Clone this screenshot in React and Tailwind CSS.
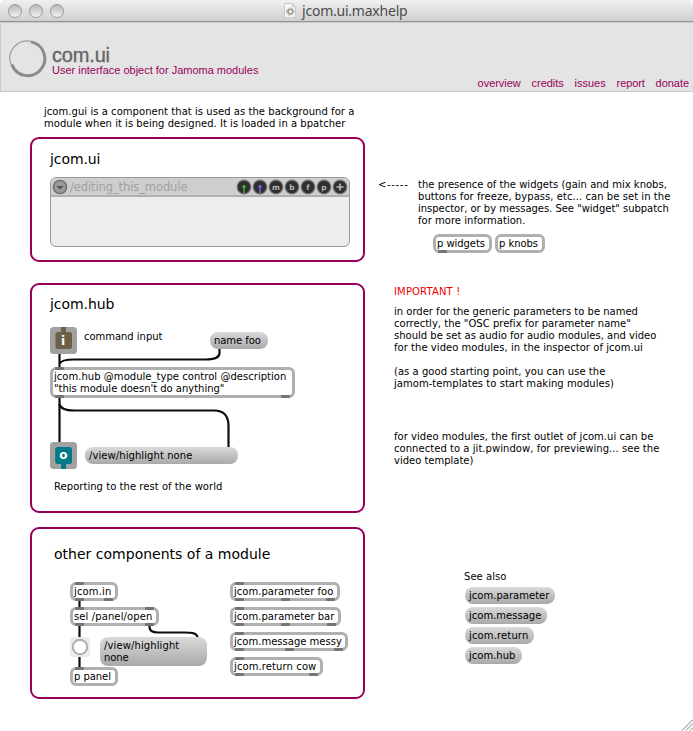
import React, { useLayoutEffect, useRef } from "react";

/* One line of text whose tracking is computed so that it spans `w` pixels. */
function Line({ w, className = "", children }) {
  const ref = useRef(null);
  useLayoutEffect(() => {
    const el = ref.current;
    el.style.letterSpacing = "0px";
    const natural = el.getBoundingClientRect().width;
    el.style.letterSpacing = (w - 0.6 - natural) / children.length + "px";
  }, [w, children]);
  return (
    <span className={"block " + className}>
      <span ref={ref} className="inline-block whitespace-pre align-top">
        {children}
      </span>
    </span>
  );
}

function Port({ className }) {
  return <span className={"absolute h-[3px] w-[9px] rounded-[1px] bg-[#747474] " + className} />;
}

function Box({ className, lines, ports = [] }) {
  return (
    <div className={"rounded-[6px] border-[3px] border-[#b0b0b0] bg-white pt-px pl-[1px] " + className}>
      {lines.map(([t, w]) => (
        <Line key={t} w={w}>{t}</Line>
      ))}
      {ports.map((p) => (
        <Port key={p} className={p} />
      ))}
    </div>
  );
}

function Message({ className, lines }) {
  return (
    <div className={"rounded-[8px] bg-linear-to-b from-[#dadada] to-[#a9a9a9] pt-[3px] pl-[4px] " + className}>
      {lines.map(([t, w]) => (
        <Line key={t} w={w}>{t}</Line>
      ))}
    </div>
  );
}

function Panel({ className, children }) {
  return (
    <section className={"relative w-[335px] rounded-[9px] border-2 border-[#99005c] bg-white " + className}>
      {children}
    </section>
  );
}

function TrafficLight() {
  return (
    <span className="h-[14px] w-[14px] rounded-full border border-[#999] bg-linear-to-b from-[#b9b9b9] via-[#d4d4d4] to-[#f4f4f4]" />
  );
}

function TitleBar() {
  return (
    <div className="flex h-[22px] items-center rounded-t-[5px] border-b border-[#949494] bg-linear-to-b from-[#f0f0f0] to-[#d0d0d0] pl-[8px]">
      <div className="flex gap-[7px]">
        <TrafficLight />
        <TrafficLight />
        <TrafficLight />
      </div>
      <svg className="ml-[220px]" width="12" height="15" viewBox="0 0 12 15">
        <path d="M.5 .5h8l3 3v11H.5z" fill="#f4f4f4" stroke="#c9c9c9" />
        <path d="M8.5 .5v3h3" fill="#ddd" stroke="#c9c9c9" />
        <circle cx="6.5" cy="8.5" r="2.3" fill="none" stroke="#9a9a9a" strokeWidth="1.5" />
        <circle cx="6.5" cy="8.5" r="3.6" fill="none" stroke="#adadad" strokeWidth="1" strokeDasharray="1.4 1.5" />
        <path d="M3.2 6.8l-.6 2.4" stroke="#7cb7dd" strokeWidth="1.2" />
        <path d="M4 11.2l2 .9" stroke="#e6a36c" strokeWidth="1.2" />
      </svg>
      <Line w={106} className="mt-px ml-[6px] font-['Noto_Sans',sans-serif] text-[14px] leading-[18px] text-[#4c4c4c]">
        jcom.ui.maxhelp
      </Line>
    </div>
  );
}

function Header() {
  return (
    <header className="flex h-[70px] justify-between border border-r-0 border-[#c8c8c8] bg-[#e4e4e4] font-['Liberation_Sans',Arial,sans-serif] text-[11px] leading-[12px] text-[#99005c]">
      <div className="flex">
        <svg className="mt-[15px] ml-[6px]" width="42" height="42" viewBox="0 0 42 42">
          <path d="M24 3.3A17.3 17.3 0 0 0 4.3 27" fill="none" stroke="#9c9c9c" strokeWidth="1.2" />
          <path d="M24 3.9A17 17 0 1 1 4.9 26.6" fill="none" stroke="#8a8a8a" strokeWidth="3" />
        </svg>
        <div className="ml-[3px] pt-[21px]">
          <Line w={58.5} className="text-[20px] leading-[22px] text-[#666] [-webkit-text-stroke:0.35px_#666]">
            com.ui
          </Line>
          <Line w={207} className="-mt-[2px]">User interface object for Jamoma modules</Line>
        </div>
      </div>
      <nav className="flex gap-[11px] self-end pr-[4px] pb-[2px]">
        <Line w={43.6}>overview</Line>
        <Line w={32.6}>credits</Line>
        <Line w={31.6}>issues</Line>
        <Line w={28.6}>report</Line>
        <Line w={34}>donate</Line>
      </nav>
    </header>
  );
}

function Widget({ children }) {
  return (
    <svg width="16" height="16" viewBox="0 0 16 16" className="font-['DejaVu_Sans',sans-serif]">
      <circle cx="8" cy="8" r="6.9" fill="#303030" stroke="#7b7b7b" strokeWidth="1.2" />
      {children}
    </svg>
  );
}

function Letter({ children }) {
  return (
    <Widget>
      <text x="8" y="11" textAnchor="middle" fontSize="7.5" fontWeight="bold" fill="#b4b4b4">{children}</text>
    </Widget>
  );
}

function Knob({ color }) {
  return (
    <Widget>
      <circle cx="8" cy="7.5" r="1.6" fill={color} />
      <path d="M8 8v6" stroke={color} strokeWidth="1.3" />
    </Widget>
  );
}

function ModulePanel() {
  return (
    <Panel className="mt-[7px] h-[125px] pt-[11px] pl-[18px]">
      <Line w={51} className="text-[14px] leading-[18px]">jcom.ui</Line>
      <div className="mt-[9px] h-[70px] w-[300px] overflow-hidden rounded-[6px] border border-[#989898] bg-[#ededed]">
        <div className="flex h-[19px] items-center justify-between border-b-2 border-[#b0b0b0] bg-[#cecece] pr-[1px] pl-[1px]">
          <div className="flex items-center">
            <svg width="16" height="16" viewBox="0 0 16 16">
              <circle cx="8" cy="8" r="6.6" fill="#9b9b9b" stroke="#6a6a6a" strokeWidth="1.4" />
              <path d="M4.2 7h7.6L8 10.6z" fill="#555" />
            </svg>
            <Line w={118} className="ml-[2px] text-[11.5px] leading-[14px] text-[#a0a0a0]">/editing_this_module</Line>
          </div>
          <div className="flex">
            <Knob color="#35c235" />
            <Knob color="#6f6ff5" />
            <Letter>m</Letter>
            <Letter>b</Letter>
            <Letter>f</Letter>
            <Letter>p</Letter>
            <Widget>
              <path d="M4.4 8h7.2M8 4.4v7.2" stroke="#b4b4b4" strokeWidth="1.7" />
            </Widget>
          </div>
        </div>
      </div>
    </Panel>
  );
}

function HubPanel() {
  return (
    <Panel className="mt-[21px] h-[230px]">
      <Line w={65} className="pt-[10px] pl-[18px] text-[14px] leading-[18px]">jcom.hub</Line>
      {/* patch cords, drawn in window coordinates */}
      <svg className="absolute top-0 left-0" width="331" height="226" viewBox="32 285 331 226">
        <g fill="none" stroke="#0c0c0c" strokeWidth="2.2">
          <path d="M59.5 354V368" />
          <path d="M219.5 348V353C219.5 358 214 359.5 206 359.5H74C66 359.5 61 360.5 60 363.5" />
          <path d="M59.5 397V443" />
          <path d="M59.5 404C60.5 409 66 410.5 74 410.5H214C224 410.5 228.5 416 228.5 426V448" />
        </g>
        <rect x="50" y="327" width="27" height="27" rx="3.5" fill="#a1a1a1" />
        <rect x="55.5" y="332" width="16.5" height="17" rx="2.5" fill="#6e5f47" />
        <rect x="61" y="327" width="5" height="6" fill="#6e5f47" />
        <rect x="50" y="442" width="27" height="27" rx="3.5" fill="#a1a1a1" />
        <rect x="55.2" y="447" width="16.8" height="17" rx="2.5" fill="#007a84" />
        <rect x="61" y="463" width="5" height="6" fill="#007a84" />
        <g fill="#fff" fontSize="12" fontWeight="bold" textAnchor="middle" className="font-['DejaVu_Sans',sans-serif]">
          <text x="63" y="344.5">i</text>
          <text x="63.4" y="459">o</text>
        </g>
      </svg>
      <Line w={79} className="absolute top-[46px] left-[52px]">command input</Line>
      <Message className="absolute top-[47px] left-[178px] h-[17px] w-[58px]" lines={[["name foo", 47.5]]} />
      <Box
        className="absolute top-[82px] left-[18px] h-[31px] w-[245px]"
        lines={[["jcom.hub @module_type control @description", 233], ['"this module doesn\'t do anything"', 171]]}
        ports={["-top-[3px] left-[2px]", "-bottom-[3px] left-[2px]", "-bottom-[3px] right-[2px]"]}
      />
      <Message className="absolute top-[162px] left-[53px] h-[17px] w-[153px]" lines={[["/view/highlight none", 104]]} />
      <Line w={169} className="absolute top-[196px] left-[22px]">Reporting to the rest of the world</Line>
    </Panel>
  );
}

function ComponentsPanel() {
  return (
    <Panel className="mt-[14px] h-[172px]">
      <Line w={217} className="pt-[16px] pl-[22px] text-[14px] leading-[18px]">other components of a module</Line>
      <svg className="absolute top-0 left-0" width="331" height="168" viewBox="32 529 331 168">
        <g fill="none" stroke="#0c0c0c" strokeWidth="2.2">
          <path d="M79.5 600V608M79.5 625V638M79.5 656V668" />
          <path d="M149.5 625V627C149.5 631 152 632.5 158 632.5H184C192 632.5 197.5 633 197.5 638" />
        </g>
        <rect x="70" y="637" width="20" height="20" rx="2" fill="#ececec" />
        <circle cx="80" cy="647" r="7.2" fill="#fff" stroke="#b0b0b0" strokeWidth="2" />
      </svg>
      <Box
        className="absolute top-[53px] left-[38px] h-[19px] w-[48px]"
        lines={[["jcom.in", 38]]}
        ports={["-top-[3px] left-[2px]", "-bottom-[3px] left-[2px]", "-bottom-[3px] right-[2px]"]}
      />
      <Box
        className="absolute top-[78px] left-[38px] h-[19px] w-[89px]"
        lines={[["sel /panel/open", 79]]}
        ports={["-top-[3px] left-[2px]", "-top-[3px] right-[2px]", "-bottom-[3px] left-[2px]", "-bottom-[3px] right-[2px]"]}
      />
      <Message
        className="absolute top-[108px] left-[68px] h-[29px] w-[107px]"
        lines={[["/view/highlight", 76], ["none", 25]]}
      />
      <Box
        className="absolute top-[138px] left-[38px] h-[19px] w-[48px]"
        lines={[["p panel", 37.5]]}
        ports={["-top-[3px] left-[2px]"]}
      />
      <Box
        className="absolute top-[53px] left-[198px] h-[19px] w-[110px]"
        lines={[["jcom.parameter foo", 100]]}
        ports={["-top-[3px] left-[2px]", "-bottom-[3px] left-[2px]", "-bottom-[3px] left-[48px]", "-bottom-[3px] right-[2px]"]}
      />
      <Box
        className="absolute top-[78px] left-[198px] h-[19px] w-[111px]"
        lines={[["jcom.parameter bar", 101]]}
        ports={["-top-[3px] left-[2px]", "-bottom-[3px] left-[2px]", "-bottom-[3px] left-[48px]", "-bottom-[3px] right-[2px]"]}
      />
      <Box
        className="absolute top-[103px] left-[198px] h-[19px] w-[118px]"
        lines={[["jcom.message messy", 108.5]]}
        ports={["-top-[3px] left-[2px]", "-bottom-[3px] left-[2px]", "-bottom-[3px] left-[52px]", "-bottom-[3px] right-[2px]"]}
      />
      <Box
        className="absolute top-[128px] left-[198px] h-[19px] w-[93px]"
        lines={[["jcom.return cow", 83]]}
        ports={["-top-[3px] left-[2px]", "-bottom-[3px] left-[2px]", "-bottom-[3px] right-[2px]"]}
      />
    </Panel>
  );
}

function Notes() {
  return (
    <div className="pt-[87px] pl-[13px]">
      <div className="flex">
        <Line w={31} className="w-[40px] shrink-0">{"<-----"}</Line>
        <div>
          <Line w={249.5}>the presence of the widgets (gain and mix knobs,</Line>
          <Line w={253}>buttons for freeze, bypass, etc... can be set in the</Line>
          <Line w={251.5}>inspector, or by messages. See "widget" subpatch</Line>
          <Line w={108}>for more information.</Line>
        </div>
      </div>
      <div className="mt-[7px] ml-[55px] flex gap-[3px]">
        <Box className="relative h-[19px] w-[59px]" lines={[["p widgets", 48.5]]} ports={["-bottom-[3px] left-[2px]"]} />
        <Box className="relative h-[19px] w-[50px]" lines={[["p knobs", 39.5]]} />
      </div>
      <div className="mt-[33px] ml-[16px]">
        <Line w={67} className="text-[#f00000]">IMPORTANT !</Line>
        <div className="mt-[8px]">
          <Line w={244.5}>in order for the generic parameters to be named</Line>
          <Line w={237.5}>correctly, the "OSC prefix for parameter name"</Line>
          <Line w={263}>should be set as audio for audio modules, and video</Line>
          <Line w={249.5}>for the video modules, in the inspector of jcom.ui</Line>
        </div>
        <div className="mt-[12px]">
          <Line w={212}>(as a good starting point, you can use the</Line>
          <Line w={220.5}>jamom-templates to start making modules)</Line>
        </div>
        <div className="mt-[41px]">
          <Line w={260}>for video modules, the first outlet of jcom.ui can be</Line>
          <Line w={266}>connected to a jit.pwindow, for previewing... see the</Line>
          <Line w={80}>video template)</Line>
        </div>
      </div>
      <div className="mt-[104px] ml-[86px]">
        <Line w={43}>See also</Line>
        <div className="mt-[4px] ml-px flex flex-col gap-[3px]">
          <Message className="h-[17px] w-[90px]" lines={[["jcom.parameter", 81]]} />
          <Message className="h-[17px] w-[82px]" lines={[["jcom.message", 73]]} />
          <Message className="h-[17px] w-[69px]" lines={[["jcom.return", 60]]} />
          <Message className="h-[17px] w-[57px]" lines={[["jcom.hub", 47]]} />
        </div>
      </div>
    </div>
  );
}

export default function App() {
  return (
    <div className="flex h-[731px] w-[693px] flex-col overflow-hidden bg-white font-['DejaVu_Sans',Verdana,sans-serif] text-[10px] leading-[12px] text-black">
      <TitleBar />
      <Header />
      <main className="relative flex flex-1">
        <div className="w-[335px] ml-[30px] shrink-0 pt-[14px]">
          <div className="pl-[14px]">
            <Line w={311}>jcom.gui is a component that is used as the background for a</Line>
            <Line w={302}>module when it is being designed. It is loaded in a bpatcher</Line>
          </div>
          <ModulePanel />
          <HubPanel />
          <ComponentsPanel />
        </div>
        <Notes />
        <svg className="absolute right-0 bottom-0" width="13" height="12" viewBox="0 0 13 12">
          <path d="M2 11.5L13 .5M6 11.5L13 4.5M10 11.5L13 8.5" stroke="#808080" strokeWidth="1" />
        </svg>
      </main>
    </div>
  );
}
